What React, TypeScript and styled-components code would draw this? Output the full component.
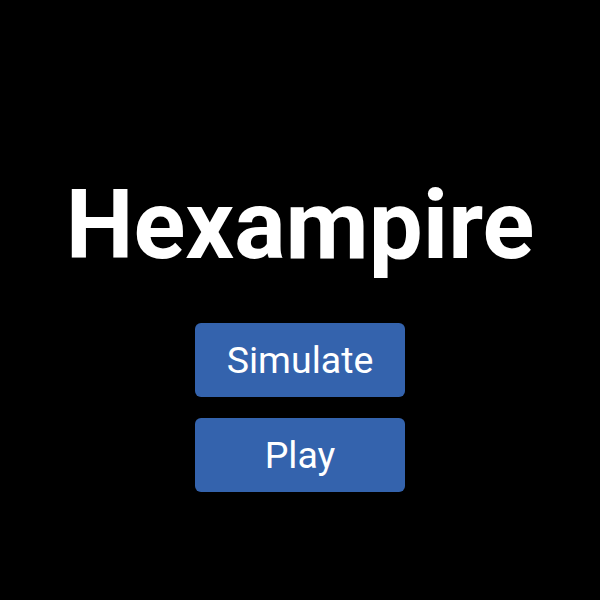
import React from "react";
import styled, { createGlobalStyle } from "styled-components";

const Global = createGlobalStyle`
  html, body { margin: 0; padding: 0; background: #000; }
  body { font-family: Roboto, "Noto Sans", sans-serif; }
`;

const Screen = styled.main`
  width: 600px;
  height: 600px;
  display: flex;
  flex-direction: column;
  align-items: center;
  padding-top: 169px;
  box-sizing: border-box;
  background: #000;
`;

const Title = styled.h1`
  margin: 0;
  font-family: Roboto, sans-serif;
  font-weight: 700;
  font-size: 96px;
  line-height: 112px;
  color: #fff;
`;

const Menu = styled.nav`
  display: flex;
  flex-direction: column;
  gap: 21px;
  margin-top: 42px;
`;

const MenuButton = styled.button`
  width: 210px;
  height: 74px;
  padding: 0;
  border: none;
  border-radius: 6px;
  background: #3463ad;
  color: #fff;
  font-family: Roboto, sans-serif;
  font-size: 37.5px;
  font-weight: 400;
  cursor: pointer;
`;

export default function App() {
  return (
    <>
      <Global />
      <Screen>
        <Title>Hexampire</Title>
        <Menu>
          <MenuButton>Simulate</MenuButton>
          <MenuButton>Play</MenuButton>
        </Menu>
      </Screen>
    </>
  );
}
